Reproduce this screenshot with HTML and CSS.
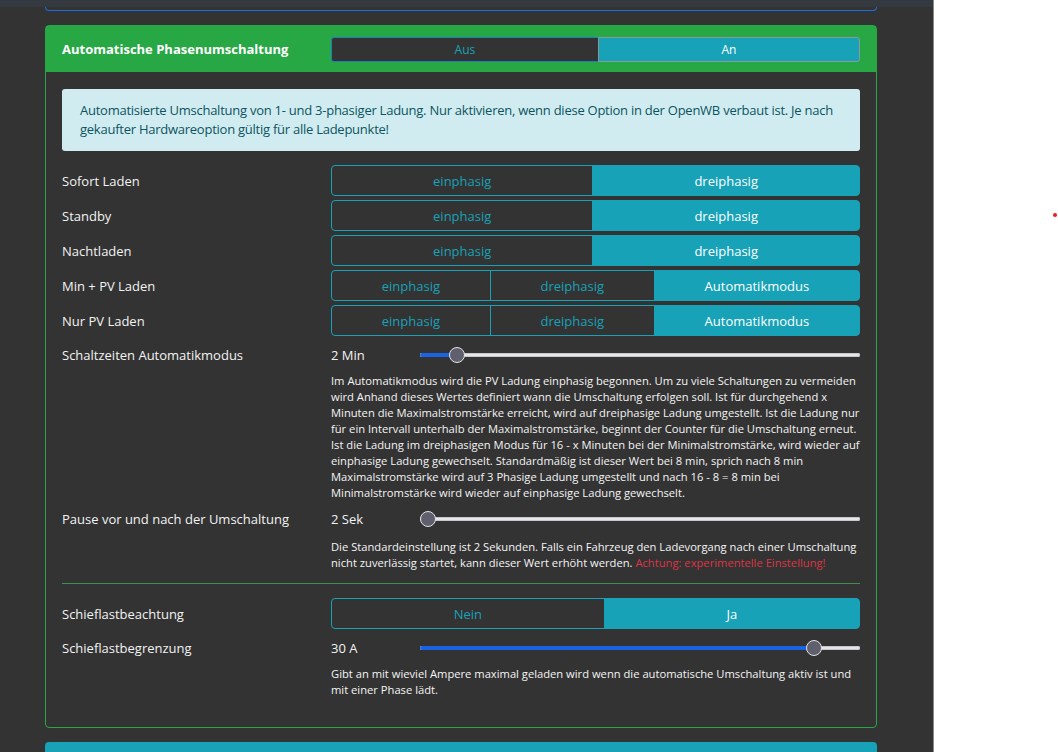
FILE: index.html
```html
<!DOCTYPE html>
<html lang="de">
<head>
<meta charset="utf-8">
<title>Automatische Phasenumschaltung</title>
<link rel="stylesheet" href="styles.css">
</head>
<body>
<div class="screen">
  <main class="page">
    <div class="topbar"></div>
    <div class="prev-card"></div>

    <section class="card card-green">
      <header class="card-header">
        <h2 class="card-title">Automatische Phasenumschaltung</h2>
        <div class="btn-group btn-group-sm">
          <button class="btn btn-off">Aus</button>
          <button class="btn active btn-on">An</button>
        </div>
      </header>

      <div class="card-body">
        <div class="alert">Automatisierte Umschaltung von 1- und 3-phasiger Ladung. Nur aktivieren, wenn diese Option in der OpenWB verbaut ist. Je nach gekaufter Hardwareoption gültig für alle Ladepunkte!</div>

        <div class="setting">
          <span class="setting-label">Sofort Laden</span>
          <div class="btn-group">
            <button class="btn">einphasig</button>
            <button class="btn active">dreiphasig</button>
          </div>
        </div>
        <div class="setting">
          <span class="setting-label">Standby</span>
          <div class="btn-group">
            <button class="btn">einphasig</button>
            <button class="btn active">dreiphasig</button>
          </div>
        </div>
        <div class="setting">
          <span class="setting-label">Nachtladen</span>
          <div class="btn-group">
            <button class="btn">einphasig</button>
            <button class="btn active">dreiphasig</button>
          </div>
        </div>
        <div class="setting">
          <span class="setting-label">Min + PV Laden</span>
          <div class="btn-group">
            <button class="btn">einphasig</button>
            <button class="btn">dreiphasig</button>
            <button class="btn active">Automatikmodus</button>
          </div>
        </div>
        <div class="setting">
          <span class="setting-label">Nur PV Laden</span>
          <div class="btn-group">
            <button class="btn">einphasig</button>
            <button class="btn">dreiphasig</button>
            <button class="btn active">Automatikmodus</button>
          </div>
        </div>

        <div class="setting setting-range">
          <span class="setting-label">Schaltzeiten Automatikmodus</span>
          <div class="range">
            <span class="range-value">2 Min</span>
            <div class="track">
              <div class="fill" style="width:37px"></div>
              <div class="thumb" style="left:29px"></div>
            </div>
          </div>
        </div>
        <p class="help help-long">Im Automatikmodus wird die PV Ladung einphasig begonnen. Um zu viele Schaltungen zu vermeiden wird Anhand dieses Wertes definiert wann die Umschaltung erfolgen soll. Ist für durchgehend x Minuten die Maximalstromstärke erreicht, wird auf dreiphasige Ladung umgestellt. Ist die Ladung nur für ein Intervall unterhalb der Maximalstromstärke, beginnt der Counter für die Umschaltung erneut. Ist die Ladung im dreiphasigen Modus für 16 - x Minuten bei der Minimalstromstärke, wird wieder auf einphasige Ladung gewechselt. Standardmäßig ist dieser Wert bei 8 min, sprich nach 8 min Maximalstromstärke wird auf 3 Phasige Ladung umgestellt und nach 16 - 8 = 8 min bei Minimalstromstärke wird wieder auf einphasige Ladung gewechselt.</p>

        <div class="setting setting-range">
          <span class="setting-label">Pause vor und nach der Umschaltung</span>
          <div class="range">
            <span class="range-value">2 Sek</span>
            <div class="track">
              <div class="fill" style="width:0px"></div>
              <div class="thumb" style="left:0px"></div>
            </div>
          </div>
        </div>
        <p class="help help-short">Die Standardeinstellung ist 2 Sekunden. Falls ein Fahrzeug den Ladevorgang nach einer Umschaltung nicht zuverlässig startet, kann dieser Wert erhöht werden. <span class="danger">Achtung: experimentelle Einstellung!</span></p>

        <hr class="divider">

        <div class="setting">
          <span class="setting-label">Schieflastbeachtung</span>
          <div class="btn-group">
            <button class="btn">Nein</button>
            <button class="btn active">Ja</button>
          </div>
        </div>
        <div class="setting setting-range">
          <span class="setting-label">Schieflastbegrenzung</span>
          <div class="range">
            <span class="range-value">30 A</span>
            <div class="track">
              <div class="fill" style="width:393px"></div>
              <div class="thumb" style="left:386px"></div>
            </div>
          </div>
        </div>
        <p class="help">Gibt an mit wieviel Ampere maximal geladen wird wenn die automatische Umschaltung aktiv ist und mit einer Phase lädt.</p>
      </div>
    </section>

    <section class="card card-teal"></section>
  </main>
  <aside class="blank"><span class="dot"></span></aside>
</div>
</body>
</html>
```
FILE: styles.css
```css
html, body {
  margin: 0;
  padding: 0;
}
body {
  font-family: "Open Sans", "Noto Sans", "DejaVu Sans", sans-serif;
  background: #ffffff;
  color: #f2f2f2;
}
.screen {
  display: flex;
  height: 752px;
  overflow: hidden;
}
.page {
  flex: none;
  width: 933px;
  background: #333333;
  border-right: 1px solid #8c8c8c;
}
.blank {
  flex: 1;
  position: relative;
  background: #ffffff;
}
.dot {
  position: absolute;
  left: 119px;
  top: 213px;
  width: 4px;
  height: 4px;
  border-radius: 50%;
  background: #f01c24;
}
.topbar {
  height: 7px;
  background: #353a41;
}
.prev-card {
  margin-left: 45px;
  width: 832px;
  height: 4px;
  box-sizing: border-box;
  border: 1px solid #1a6fe0;
  border-top: 0;
  border-radius: 0 0 4px 4px;
}
.card {
  margin: 14px 0 0 45px;
  width: 832px;
  box-sizing: border-box;
  border-radius: 4px;
}
.card-green {
  border: 1px solid #28a745;
  background: #333333;
}
.card-teal {
  height: 40px;
  background: #17a2b8;
  border-radius: 4px 4px 0 0;
}
.card-header {
  height: 46px;
  padding: 0 16px;
  background: #28a745;
  display: grid;
  grid-template-columns: 269px 1fr;
  align-items: center;
}
.card-title {
  margin: 0;
  font-size: 13px;
  font-weight: 700;
  color: #ffffff;
}
.card-body {
  padding: 17px 16px 29px;
}
.alert {
  padding: 12px 18px;
  background: #d1ecf1;
  color: #0c5460;
  border-radius: 3px;
  font-size: 13px;
  letter-spacing: -0.25px;
  line-height: 19px;
  margin-bottom: 14px;
}
.setting {
  display: grid;
  grid-template-columns: 269px 1fr;
  align-items: center;
  margin-bottom: 4px;
}
.setting-label {
  font-size: 13px;
  color: #f2f2f2;
}
.btn-group {
  display: flex;
  height: 31px;
}
.btn {
  flex: 1 1 auto;
  margin: 0;
  padding: 0 12px;
  font-family: inherit;
  font-size: 13px;
  color: #17a2b8;
  background: transparent;
  border: 1px solid #17a2b8;
  border-radius: 0;
  cursor: pointer;
}
.btn + .btn {
  margin-left: -1px;
}
.btn:first-child {
  border-radius: 4px 0 0 4px;
}
.btn:last-child {
  border-radius: 0 4px 4px 0;
}
.btn.active {
  background: #17a2b8;
  color: #ffffff;
}
.btn-group-sm {
  height: 25px;
}
.btn-group-sm .btn {
  font-size: 12px;
}
.btn-group-sm .btn-off {
  background: #333333;
  border-color: #1f7fc0;
  border-radius: 3px 0 0 3px;
}
.btn-group-sm .btn-on {
  border-color: #8a9a9c;
  border-radius: 0 3px 3px 0;
}
.setting-range {
  margin-top: 9px;
  margin-bottom: 0;
}
.range {
  display: flex;
  align-items: center;
  height: 20px;
}
.range-value {
  width: 89px;
  font-size: 13px;
}
.track {
  flex: 1;
  position: relative;
  height: 4px;
  background: #e6e6e8;
  border-radius: 2px;
  box-shadow: inset 0 0 0 1px #c8c8cc;
}
.fill {
  height: 100%;
  background: #1a64e4;
  border-radius: 2px;
}
.thumb {
  position: absolute;
  top: -6px;
  width: 16px;
  height: 16px;
  box-sizing: border-box;
  border-radius: 50%;
  background: #5f5f6d;
  border: 1.5px solid #e4e4e8;
}
.help {
  margin: 8px 0 0 269px;
  font-size: 11.2px;
  line-height: 16px;
  color: #f4f4f4;
}
.help-long + .setting-range {
  margin-top: 8px;
}
.help-short {
  margin-top: 10px;
}
.danger {
  color: #dc3545;
}
.divider {
  margin: 12px 0 14px;
  border: 0;
  border-top: 1px solid #3e8f4e;
  height: 0;
}
```
